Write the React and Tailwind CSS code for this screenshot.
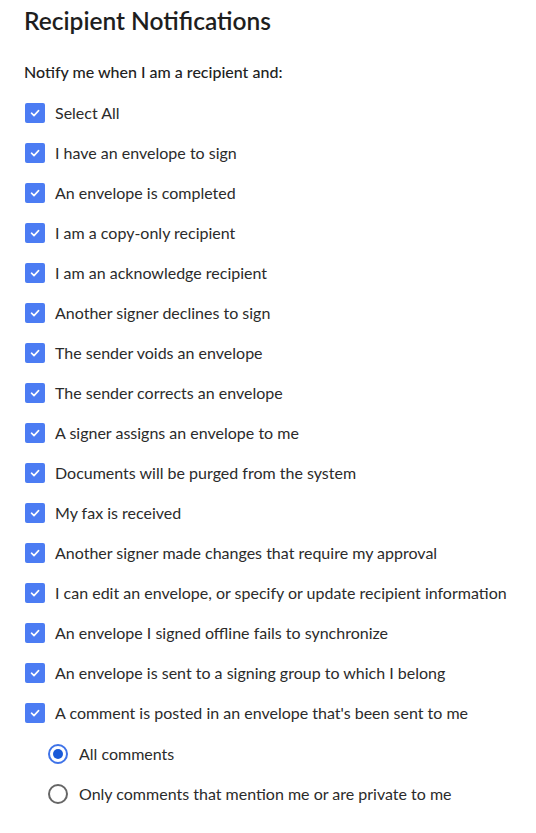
import React from 'react';

const ITEMS = [
  'Select All',
  'I have an envelope to sign',
  'An envelope is completed',
  'I am a copy-only recipient',
  'I am an acknowledge recipient',
  'Another signer declines to sign',
  'The sender voids an envelope',
  'The sender corrects an envelope',
  'A signer assigns an envelope to me',
  'Documents will be purged from the system',
  'My fax is received',
  'Another signer made changes that require my approval',
  'I can edit an envelope, or specify or update recipient information',
  'An envelope I signed offline fails to synchronize',
  'An envelope is sent to a signing group to which I belong',
  "A comment is posted in an envelope that's been sent to me",
];

const CheckBox = () => (
  <span className="w-5 h-5 rounded-[2px] bg-[#4c7cf3] flex items-center justify-center shrink-0">
    <svg width="12" height="12" viewBox="0 0 12 12" fill="none">
      <path d="M2.5 6.2 L5 8.6 L9.6 3.6" stroke="white" strokeWidth="1.6" strokeLinecap="round" strokeLinejoin="round" />
    </svg>
  </span>
);

const Radio = ({ checked }) => (
  <span className={`w-5 h-5 rounded-full border-2 flex items-center justify-center shrink-0 ${checked ? 'border-[#3f73e8]' : 'border-[#666]'}`}>
    {checked && <span className="w-2.5 h-2.5 rounded-full bg-[#1a5ad8]" />}
  </span>
);

export default function App() {
  return (
    <div className="min-h-screen bg-white pl-6 pt-[6px] font-['Lato',sans-serif] text-[#2b2b2b]">
      <h1 className="text-[24.5px] leading-[30px] font-semibold text-[#1e1e1e]">Recipient Notifications</h1>
      <p className="mt-[26px] text-[16px] leading-5 font-medium text-[#222]">Notify me when I am a recipient and:</p>

      <div className="mt-[11px] flex flex-col">
        {ITEMS.map((label) => (
          <label key={label} className="h-10 flex items-center gap-[10px] pl-px">
            <CheckBox />
            <span className="text-[16px]">{label}</span>
          </label>
        ))}
      </div>

      <div className="mt-px pl-6 flex flex-col">
        <label className="h-10 flex items-center gap-[11px]">
          <Radio checked />
          <span className="text-[16px]">All comments</span>
        </label>
        <label className="h-10 flex items-center gap-[11px]">
          <Radio />
          <span className="text-[16px]">Only comments that mention me or are private to me</span>
        </label>
      </div>
    </div>
  );
}
